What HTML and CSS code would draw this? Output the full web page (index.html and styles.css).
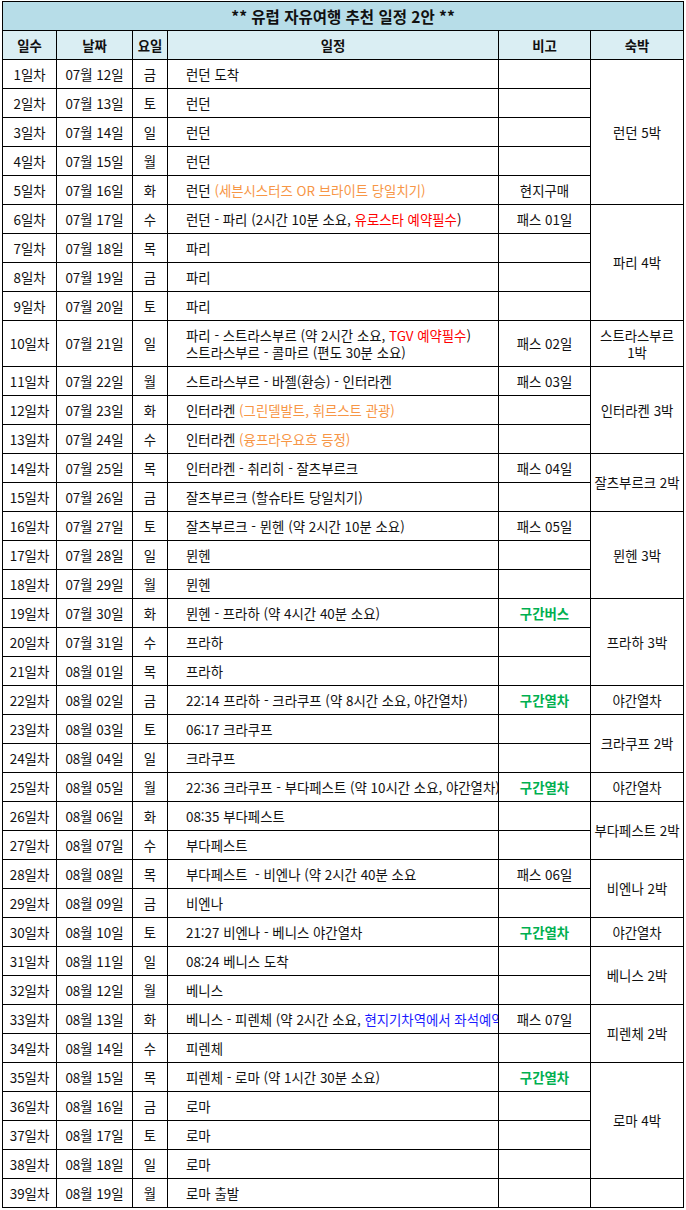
FILE: index.html
```html
<!DOCTYPE html>
<html lang="ko">
<head>
<meta charset="utf-8">
<title>유럽 자유여행 추천 일정 2안</title>
<link rel="stylesheet" href="styles.css">
</head>
<body>
<table class="plan">
<colgroup>
<col class="c-day"><col class="c-date"><col class="c-wd"><col class="c-plan"><col class="c-note"><col class="c-stay">
</colgroup>
<thead>
<tr class="title-row"><th colspan="6">** 유럽 자유여행 추천 일정 2안 **</th></tr>
<tr class="head-row"><th>일수</th><th>날짜</th><th>요일</th><th>일정</th><th>비고</th><th>숙박</th></tr>
</thead>
<tbody>
<tr><td>1일차</td><td>07월 12일</td><td>금</td><td class="p">런던 도착</td><td></td><td rowspan="5">런던 5박</td></tr>
<tr><td>2일차</td><td>07월 13일</td><td>토</td><td class="p">런던</td><td></td></tr>
<tr><td>3일차</td><td>07월 14일</td><td>일</td><td class="p">런던</td><td></td></tr>
<tr><td>4일차</td><td>07월 15일</td><td>월</td><td class="p">런던</td><td></td></tr>
<tr><td>5일차</td><td>07월 16일</td><td>화</td><td class="p">런던 <span class="orange">(세븐시스터즈 OR 브라이트 당일치기)</span></td><td>현지구매</td></tr>
<tr><td>6일차</td><td>07월 17일</td><td>수</td><td class="p">런던 - 파리 (2시간 10분 소요, <span class="red">유로스타 예약필수</span>)</td><td>패스 01일</td><td rowspan="4">파리 4박</td></tr>
<tr><td>7일차</td><td>07월 18일</td><td>목</td><td class="p">파리</td><td></td></tr>
<tr><td>8일차</td><td>07월 19일</td><td>금</td><td class="p">파리</td><td></td></tr>
<tr><td>9일차</td><td>07월 20일</td><td>토</td><td class="p">파리</td><td></td></tr>
<tr class="tall"><td>10일차</td><td>07월 21일</td><td>일</td><td class="p">파리 - 스트라스부르 (약 2시간 소요, <span class="red">TGV 예약필수</span>)<br>스트라스부르 - 콜마르 (편도 30분 소요)</td><td>패스 02일</td><td>스트라스부르<br>1박</td></tr>
<tr><td>11일차</td><td>07월 22일</td><td>월</td><td class="p">스트라스부르 - 바젤(환승) - 인터라켄</td><td>패스 03일</td><td rowspan="3">인터라켄 3박</td></tr>
<tr><td>12일차</td><td>07월 23일</td><td>화</td><td class="p">인터라켄 <span class="orange">(그린델발트, 휘르스트 관광)</span></td><td></td></tr>
<tr><td>13일차</td><td>07월 24일</td><td>수</td><td class="p">인터라켄 <span class="orange">(융프라우요흐 등정)</span></td><td></td></tr>
<tr><td>14일차</td><td>07월 25일</td><td>목</td><td class="p">인터라켄 - 취리히 - 잘츠부르크</td><td>패스 04일</td><td rowspan="2">잘츠부르크 2박</td></tr>
<tr><td>15일차</td><td>07월 26일</td><td>금</td><td class="p">잘츠부르크 (할슈타트 당일치기)</td><td></td></tr>
<tr><td>16일차</td><td>07월 27일</td><td>토</td><td class="p">잘츠부르크 - 뮌헨 (약 2시간 10분 소요)</td><td>패스 05일</td><td rowspan="3">뮌헨 3박</td></tr>
<tr><td>17일차</td><td>07월 28일</td><td>일</td><td class="p">뮌헨</td><td></td></tr>
<tr><td>18일차</td><td>07월 29일</td><td>월</td><td class="p">뮌헨</td><td></td></tr>
<tr><td>19일차</td><td>07월 30일</td><td>화</td><td class="p">뮌헨 - 프라하 (약 4시간 40분 소요)</td><td class="green">구간버스</td><td rowspan="3">프라하 3박</td></tr>
<tr><td>20일차</td><td>07월 31일</td><td>수</td><td class="p">프라하</td><td></td></tr>
<tr><td>21일차</td><td>08월 01일</td><td>목</td><td class="p">프라하</td><td></td></tr>
<tr><td>22일차</td><td>08월 02일</td><td>금</td><td class="p">22:14 프라하 - 크라쿠프 (약 8시간 소요, 야간열차)</td><td class="green">구간열차</td><td>야간열차</td></tr>
<tr><td>23일차</td><td>08월 03일</td><td>토</td><td class="p">06:17 크라쿠프</td><td></td><td rowspan="2">크라쿠프 2박</td></tr>
<tr><td>24일차</td><td>08월 04일</td><td>일</td><td class="p">크라쿠프</td><td></td></tr>
<tr><td>25일차</td><td>08월 05일</td><td>월</td><td class="p">22:36 크라쿠프 - 부다페스트 (약 10시간 소요, 야간열차)</td><td class="green">구간열차</td><td>야간열차</td></tr>
<tr><td>26일차</td><td>08월 06일</td><td>화</td><td class="p">08:35 부다페스트</td><td></td><td rowspan="2">부다페스트 2박</td></tr>
<tr><td>27일차</td><td>08월 07일</td><td>수</td><td class="p">부다페스트</td><td></td></tr>
<tr><td>28일차</td><td>08월 08일</td><td>목</td><td class="p">부다페스트&nbsp; - 비엔나 (약 2시간 40분 소요</td><td>패스 06일</td><td rowspan="2">비엔나 2박</td></tr>
<tr><td>29일차</td><td>08월 09일</td><td>금</td><td class="p">비엔나</td><td></td></tr>
<tr><td>30일차</td><td>08월 10일</td><td>토</td><td class="p">21:27 비엔나 - 베니스 야간열차</td><td class="green">구간열차</td><td>야간열차</td></tr>
<tr><td>31일차</td><td>08월 11일</td><td>일</td><td class="p">08:24 베니스 도착</td><td></td><td rowspan="2">베니스 2박</td></tr>
<tr><td>32일차</td><td>08월 12일</td><td>월</td><td class="p">베니스</td><td></td></tr>
<tr><td>33일차</td><td>08월 13일</td><td>화</td><td class="p">베니스 - 피렌체 (약 2시간 소요, <span class="blue">현지기차역에서 좌석예약</span>)</td><td>패스 07일</td><td rowspan="2">피렌체 2박</td></tr>
<tr><td>34일차</td><td>08월 14일</td><td>수</td><td class="p">피렌체</td><td></td></tr>
<tr><td>35일차</td><td>08월 15일</td><td>목</td><td class="p">피렌체 - 로마 (약 1시간 30분 소요)</td><td class="green">구간열차</td><td rowspan="4">로마 4박</td></tr>
<tr><td>36일차</td><td>08월 16일</td><td>금</td><td class="p">로마</td><td></td></tr>
<tr><td>37일차</td><td>08월 17일</td><td>토</td><td class="p">로마</td><td></td></tr>
<tr><td>38일차</td><td>08월 18일</td><td>일</td><td class="p">로마</td><td></td></tr>
<tr><td>39일차</td><td>08월 19일</td><td>월</td><td class="p">로마 출발</td><td></td><td></td></tr>
</tbody>
</table>
</body>
</html>
```
FILE: styles.css
```css
html, body {
  margin: 0;
  padding: 0;
  background: #ffffff;
}

.plan {
  margin: 1px 0 0 2px;
  width: 681px;
  table-layout: fixed;
  border-collapse: collapse;
  font-family: "Noto Sans CJK KR", "Noto Sans", sans-serif;
  font-size: 13.4px;
  line-height: 17px;
  color: #111111;
}

.c-day { width: 54px; }
.c-date { width: 76px; }
.c-wd { width: 35px; }
.c-plan { width: 331px; }
.c-note { width: 92px; }
.c-stay { width: 93px; }

.plan th,
.plan td {
  border: 1px solid #000000;
  padding: 0;
  height: 28px;
  text-align: center;
  vertical-align: middle;
  white-space: nowrap;
  overflow: hidden;
}

.title-row th {
  background: #b7dde8;
  font-size: 15.5px;
  font-weight: 700;
}

.head-row th {
  background: #daeef3;
  font-weight: 700;
}

.plan td.p {
  text-align: left;
  padding-left: 18px;
}

.plan tr.tall td {
  height: 45px;
}

.orange { color: #f79646; }
.red { color: #ff0000; }
.blue { color: #1a1aff; }
.plan td.green {
  color: #00b050;
  font-weight: 700;
}
```
